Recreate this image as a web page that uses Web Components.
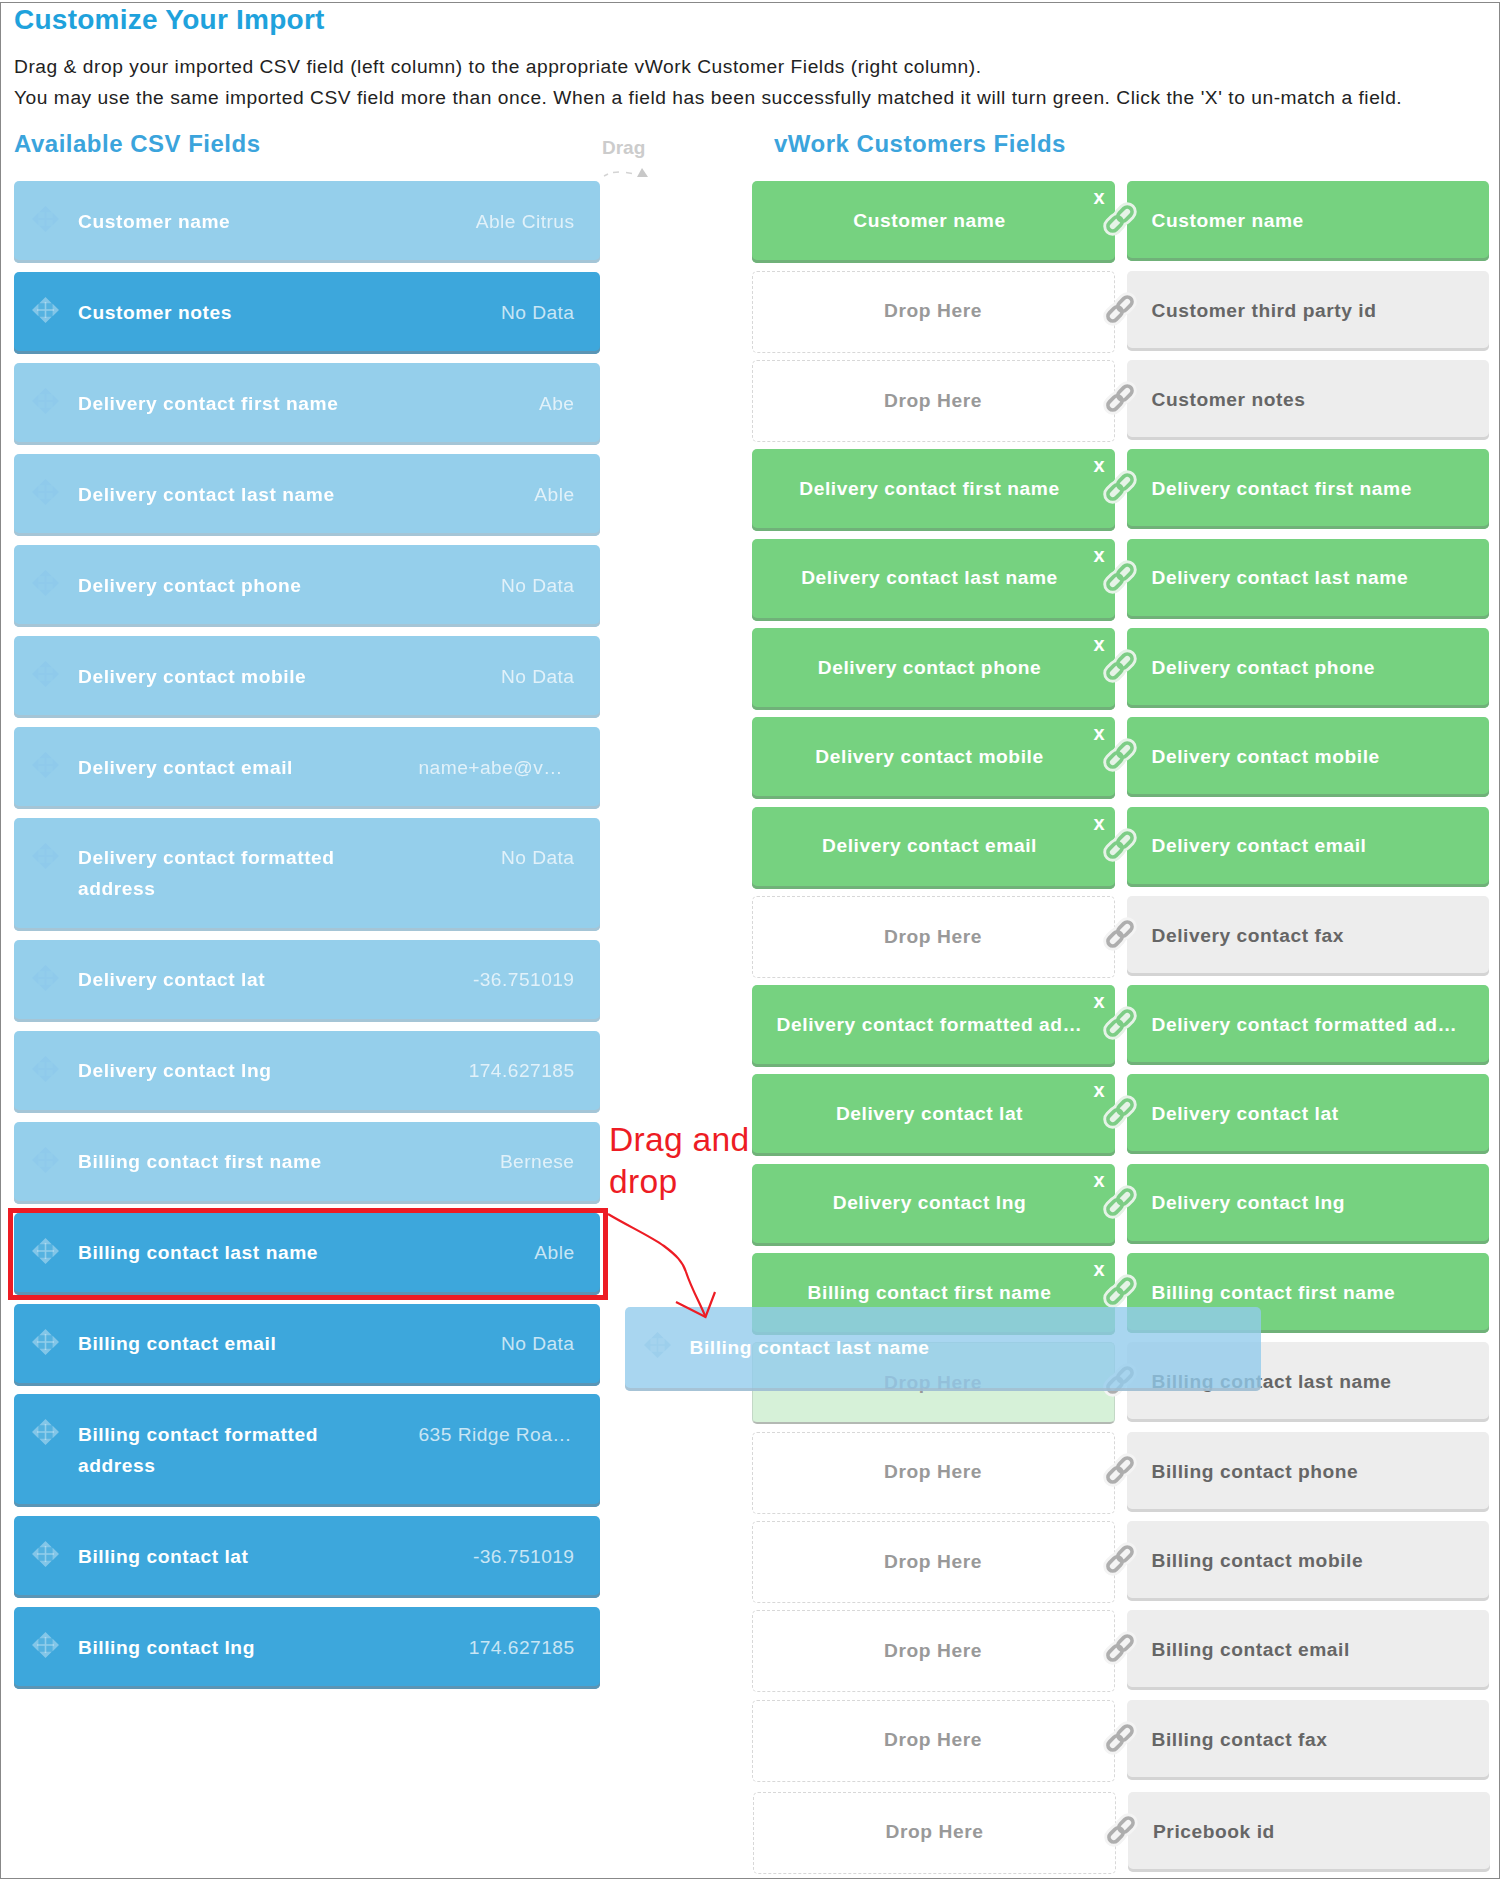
<!DOCTYPE html>
<html lang="en">
<head>
<meta charset="utf-8">
<title>Customize Your Import</title>
<style>
  html, body { margin: 0; padding: 0; background: #fff; }
  body { font-family: "Liberation Sans", Arial, sans-serif; }
</style>
</head>
<body>
<x-import-page>
  <span slot="title">Customize Your Import</span>
  <span slot="line1">Drag &amp; drop your imported CSV field (left column) to the appropriate vWork Customer Fields (right column).</span>
  <span slot="line2">You may use the same imported CSV field more than once. When a field has been successfully matched it will turn green. Click the 'X' to un-match a field.</span>
  <span slot="left-title">Available CSV Fields</span>
  <span slot="right-title">vWork Customers Fields</span>

  <x-csv-field slot="fields" faded value="Able Citrus">Customer name</x-csv-field>
  <x-csv-field slot="fields" value="No Data">Customer notes</x-csv-field>
  <x-csv-field slot="fields" faded value="Abe">Delivery contact first name</x-csv-field>
  <x-csv-field slot="fields" faded value="Able">Delivery contact last name</x-csv-field>
  <x-csv-field slot="fields" faded value="No Data">Delivery contact phone</x-csv-field>
  <x-csv-field slot="fields" faded value="No Data">Delivery contact mobile</x-csv-field>
  <x-csv-field slot="fields" faded clipped value="name+abe@v…">Delivery contact email</x-csv-field>
  <x-csv-field slot="fields" faded value="No Data">Delivery contact formatted address</x-csv-field>
  <x-csv-field slot="fields" faded value="-36.751019">Delivery contact lat</x-csv-field>
  <x-csv-field slot="fields" faded value="174.627185">Delivery contact lng</x-csv-field>
  <x-csv-field slot="fields" faded value="Bernese">Billing contact first name</x-csv-field>
  <x-csv-field slot="fields" value="Able">Billing contact last name</x-csv-field>
  <x-csv-field slot="fields" value="No Data">Billing contact email</x-csv-field>
  <x-csv-field slot="fields" clipped value="635 Ridge Roa…">Billing contact formatted address</x-csv-field>
  <x-csv-field slot="fields" value="-36.751019">Billing contact lat</x-csv-field>
  <x-csv-field slot="fields" value="174.627185">Billing contact lng</x-csv-field>

  <x-target-row slot="targets" state="matched" source="Customer name">Customer name</x-target-row>
  <x-target-row slot="targets">Customer third party id</x-target-row>
  <x-target-row slot="targets">Customer notes</x-target-row>
  <x-target-row slot="targets" state="matched" source="Delivery contact first name">Delivery contact first name</x-target-row>
  <x-target-row slot="targets" state="matched" source="Delivery contact last name">Delivery contact last name</x-target-row>
  <x-target-row slot="targets" state="matched" source="Delivery contact phone">Delivery contact phone</x-target-row>
  <x-target-row slot="targets" state="matched" source="Delivery contact mobile">Delivery contact mobile</x-target-row>
  <x-target-row slot="targets" state="matched" source="Delivery contact email">Delivery contact email</x-target-row>
  <x-target-row slot="targets">Delivery contact fax</x-target-row>
  <x-target-row slot="targets" state="matched" source="Delivery contact formatted ad…">Delivery contact formatted ad…</x-target-row>
  <x-target-row slot="targets" state="matched" source="Delivery contact lat">Delivery contact lat</x-target-row>
  <x-target-row slot="targets" state="matched" source="Delivery contact lng">Delivery contact lng</x-target-row>
  <x-target-row slot="targets" state="matched" source="Billing contact first name">Billing contact first name</x-target-row>
  <x-target-row slot="targets" state="hover">Billing contact last name</x-target-row>
  <x-target-row slot="targets">Billing contact phone</x-target-row>
  <x-target-row slot="targets">Billing contact mobile</x-target-row>
  <x-target-row slot="targets">Billing contact email</x-target-row>
  <x-target-row slot="targets">Billing contact fax</x-target-row>
  <x-target-row slot="targets" shifted>Pricebook id</x-target-row>

  <x-drag-hint slot="overlay"></x-drag-hint>
  <x-annotation slot="overlay"></x-annotation>
  <x-csv-field slot="overlay" ghost>Billing contact last name</x-csv-field>
</x-import-page>

<script>
const MOVE_ICON = `<svg viewBox="0 0 27 26" width="27" height="26" aria-hidden="true" fill="currentColor">
  <path d="M7 7h13v12H7z" opacity=".35"/>
  <path d="M12.7 5h1.6v16h-1.6zM5 12.2h17v1.6H5z"/>
  <path d="M13.5 0l6.5 6.6H7zM13.5 26L7 19.4h13zM0 13l6.6-6.5v13zM27 13l-6.6 6.5v-13z"/>
</svg>`;

class XImagePage extends HTMLElement {
  constructor() {
    super();
    this.attachShadow({ mode: 'open' }).innerHTML = `
    <style>
      :host { display: block; position: relative; width: 1500px; height: 1883px; overflow: hidden;
              font-family: "Liberation Sans", Arial, sans-serif; }
      .frame { box-sizing: border-box; margin-top: 2px; height: 1876.5px; border: 1.5px solid #888;
               padding: 0 9px 0 12.5px; }
      h1 { margin: -1px 0 0 .5px; font: bold 28px/36px "Liberation Sans", Arial, sans-serif; color: #1fa2dc;
           letter-spacing: .25px; }
      p { margin: 0 0 0 .5px; font-size: 19.2px; line-height: 31px; color: #222; letter-spacing: .54px; white-space: nowrap; }
      .intro { margin-top: 13.3px; }
      .cols { display: flex; gap: 152px; margin-top: 15.9px; }
      .left { width: 586px; flex: none; }
      .right { width: 738px; flex: none; }
      h2 { margin: 0 0 22.3px .5px; font: bold 24px/30px "Liberation Sans", Arial, sans-serif; color: #3ba4dc;
           letter-spacing: .5px; white-space: nowrap; }
      .right h2 { padding-left: 22px; }
      .stack { display: flex; flex-direction: column; gap: 8.93px; }
      .rows { display: flex; flex-direction: column; gap: 7.3px; }
    </style>
    <div class="frame">
      <h1><slot name="title"></slot></h1>
      <div class="intro"><p><slot name="line1"></slot></p><p><slot name="line2"></slot></p></div>
      <div class="cols">
        <section class="left"><h2><slot name="left-title"></slot></h2>
          <div class="stack"><slot name="fields"></slot></div></section>
        <section class="right"><h2><slot name="right-title"></slot></h2>
          <div class="rows"><slot name="targets"></slot></div></section>
      </div>
    </div>
    <slot name="overlay"></slot>`;
  }
}
customElements.define('x-import-page', XImagePage);

class XCsvField extends HTMLElement {
  constructor() {
    super();
    const v = this.getAttribute('value');
    this.attachShadow({ mode: 'open' }).innerHTML = `
    <style>
      :host { display: block; box-sizing: border-box; min-height: 82px; padding: 24.5px 25px 26.5px 0;
              background: #3da7dc; border-radius: 5px; box-shadow: inset 0 -3px 0 #5b95b5; position: relative;
              color: #fff; font: bold 19.2px/31px "Liberation Sans", Arial, sans-serif; letter-spacing: .56px; }
      :host([faded]) { opacity: .54; }
      :host([ghost]) { position: absolute; left: 625px; top: 1307px; width: 636px; height: 84px; z-index: 1;
                       background: rgba(146,203,236,.79); box-shadow: inset 0 -3px 0 rgba(165,185,200,.65); }
      .row { display: flex; }
      .icon { flex: none; width: 64.5px; color: rgba(255,255,255,.36); position: relative; }
      .icon svg { position: absolute; left: 18.5px; top: .5px; }
      :host([faded]) .icon { color: #319fdc; }
      :host([ghost]) .icon { color: #9dcfec; }
      .name { flex: 1; padding-right: 20px; }
      .value { flex: none; width: 156px; text-align: right; white-space: nowrap; font-weight: normal; letter-spacing: .45px;
               color: rgba(255,255,255,.72); }
      :host([clipped]) .value { text-align: left; }
    </style>
    <div class="row"><span class="icon">${MOVE_ICON}</span><span class="name"><slot></slot></span>${v ? `<span class="value">${v}</span>` : ''}</div>`;
  }
}
customElements.define('x-csv-field', XCsvField);

class XLinkIcon extends HTMLElement {
  constructor() {
    super();
    const links = `<g transform="rotate(-45 18 18)">
        <rect x="3" y="13.25" width="16" height="9.5" rx="4.75"/><rect x="17" y="13.25" width="16" height="9.5" rx="4.75"/></g>`;
    this.attachShadow({ mode: 'open' }).innerHTML = `
    <style>
      :host { display: block; position: absolute; left: 350px; top: 20px; width: 36px; height: 36px; }
      svg { display: block; overflow: visible; }
      .halo { stroke: var(--halo, #f3f3f3); stroke-width: 9.5; filter: blur(.7px); }
      .ink { stroke: var(--ink, #aaa); stroke-width: 3.7; }
      g { fill: none; }
    </style>
    <svg viewBox="0 0 36 36" width="36" height="36" aria-hidden="true">
      <g class="halo">${links}</g>
      <g class="ink">${links}</g>
    </svg>`;
  }
}
customElements.define('x-link-icon', XLinkIcon);

class XTargetRow extends HTMLElement {
  constructor() {
    super();
    const state = this.getAttribute('state') || 'empty';
    const source = this.getAttribute('source');
    const drop = state === 'matched'
      ? `<div class="drop matched"><span class="x">x</span><span class="src">${source}</span></div>`
      : `<div class="drop ${state}"><span class="here">Drop Here</span></div>`;
    this.attachShadow({ mode: 'open' }).innerHTML = `
    <style>
      :host { display: block; position: relative; height: 82px;
              font: bold 19.2px/31px "Liberation Sans", Arial, sans-serif; letter-spacing: .56px; }
      :host([shifted]) { margin: 2.7px 0 0 1.5px; }
      .grid { display: grid; grid-template-columns: 363px 362px; gap: 12px; align-items: start; }
      .drop { box-sizing: border-box; height: 82px; border-radius: 5px; text-align: center; position: relative;
              white-space: nowrap; overflow: hidden; }
      .empty { border: 1px dashed #d8d8d8; padding-top: 23.7px; color: #999; }
      .hover { border: 1px solid #c3d8c6; border-bottom: 2px solid #b3b9b3; padding-top: 23.7px; color: #999; background: #d6f1d8; }
      .matched { background: #76d280; box-shadow: inset 0 -3px 0 #70b179; color: #fff; padding: 23.7px 7px 0 0; }
      .x { position: absolute; right: 10px; top: 1px; font-size: 20px; letter-spacing: 0; }
      .field { box-sizing: border-box; height: 80px; border-radius: 5px; padding: 24px 12px 0 25px; white-space: nowrap;
               background: #ededed; box-shadow: inset 0 -3px 0 #d4d4d4; color: #666; overflow: hidden; }
      .field.matched { background: #76d280; box-shadow: inset 0 -3px 0 #70b179; color: #fff; padding: 23.7px 12px 0 25px; }
      x-link-icon { --halo: ${state === 'matched' ? '#e6f3e7' : '#f4f4f4'}; --ink: ${state === 'matched' ? '#7dcd86' : '#aeaeae'}; }
    </style>
    <div class="grid">${drop}<div class="field ${state === 'matched' ? 'matched' : ''}"><slot></slot></div></div>
    <x-link-icon></x-link-icon>`;
  }
}
customElements.define('x-target-row', XTargetRow);

class XDragHint extends HTMLElement {
  constructor() {
    super();
    this.attachShadow({ mode: 'open' }).innerHTML = `
    <style>
      :host { display: block; position: absolute; left: 602px; top: 136px; width: 50px; height: 44px;
              color: #ccc; font: bold 19px/24px "Liberation Sans", Arial, sans-serif; }
      svg { position: absolute; left: 0; top: 30px; }
    </style>
    <span>Drag</span>
    <svg width="48" height="12" viewBox="0 0 48 12" aria-hidden="true">
      <path d="M2 10 L6 8 M11 6.5 L17 6 M24 6.5 L30 7.5" stroke="#d4d4d4" stroke-width="1.5" fill="none"/>
      <path d="M35 11 L40 2 L46 11z" fill="#c8c8c8"/>
    </svg>`;
  }
}
customElements.define('x-drag-hint', XDragHint);

class XAnnotation extends HTMLElement {
  constructor() {
    super();
    this.attachShadow({ mode: 'open' }).innerHTML = `
    <style>
      :host { display: block; position: absolute; left: 0; top: 0; width: 0; height: 0; z-index: 2; }
      .box { position: absolute; left: 8px; top: 1208px; width: 600px; height: 92px; box-sizing: border-box;
             border: 5px solid #ed1c24; }
      .label { position: absolute; left: 609px; top: 1119px; width: 145px; color: #ed1c24; letter-spacing: .3px;
               font: 33.6px/42px "Liberation Sans", Arial, sans-serif; }
      svg { position: absolute; left: 600px; top: 1205px; overflow: visible; }
    </style>
    <div class="box"></div>
    <div class="label">Drag and drop</div>
    <svg width="130" height="120" viewBox="600 1205 130 120" aria-hidden="true" fill="none" stroke="#ed1c24" stroke-width="2.2">
      <path d="M608 1214 C628 1226 650 1236 664 1246 C676 1255 683 1262 686 1272 C692 1290 701 1305 705.5 1317"/>
      <path d="M676 1302 L705.5 1317 L715 1292"/>
    </svg>`;
  }
}
customElements.define('x-annotation', XAnnotation);
</script>
</body>
</html>
